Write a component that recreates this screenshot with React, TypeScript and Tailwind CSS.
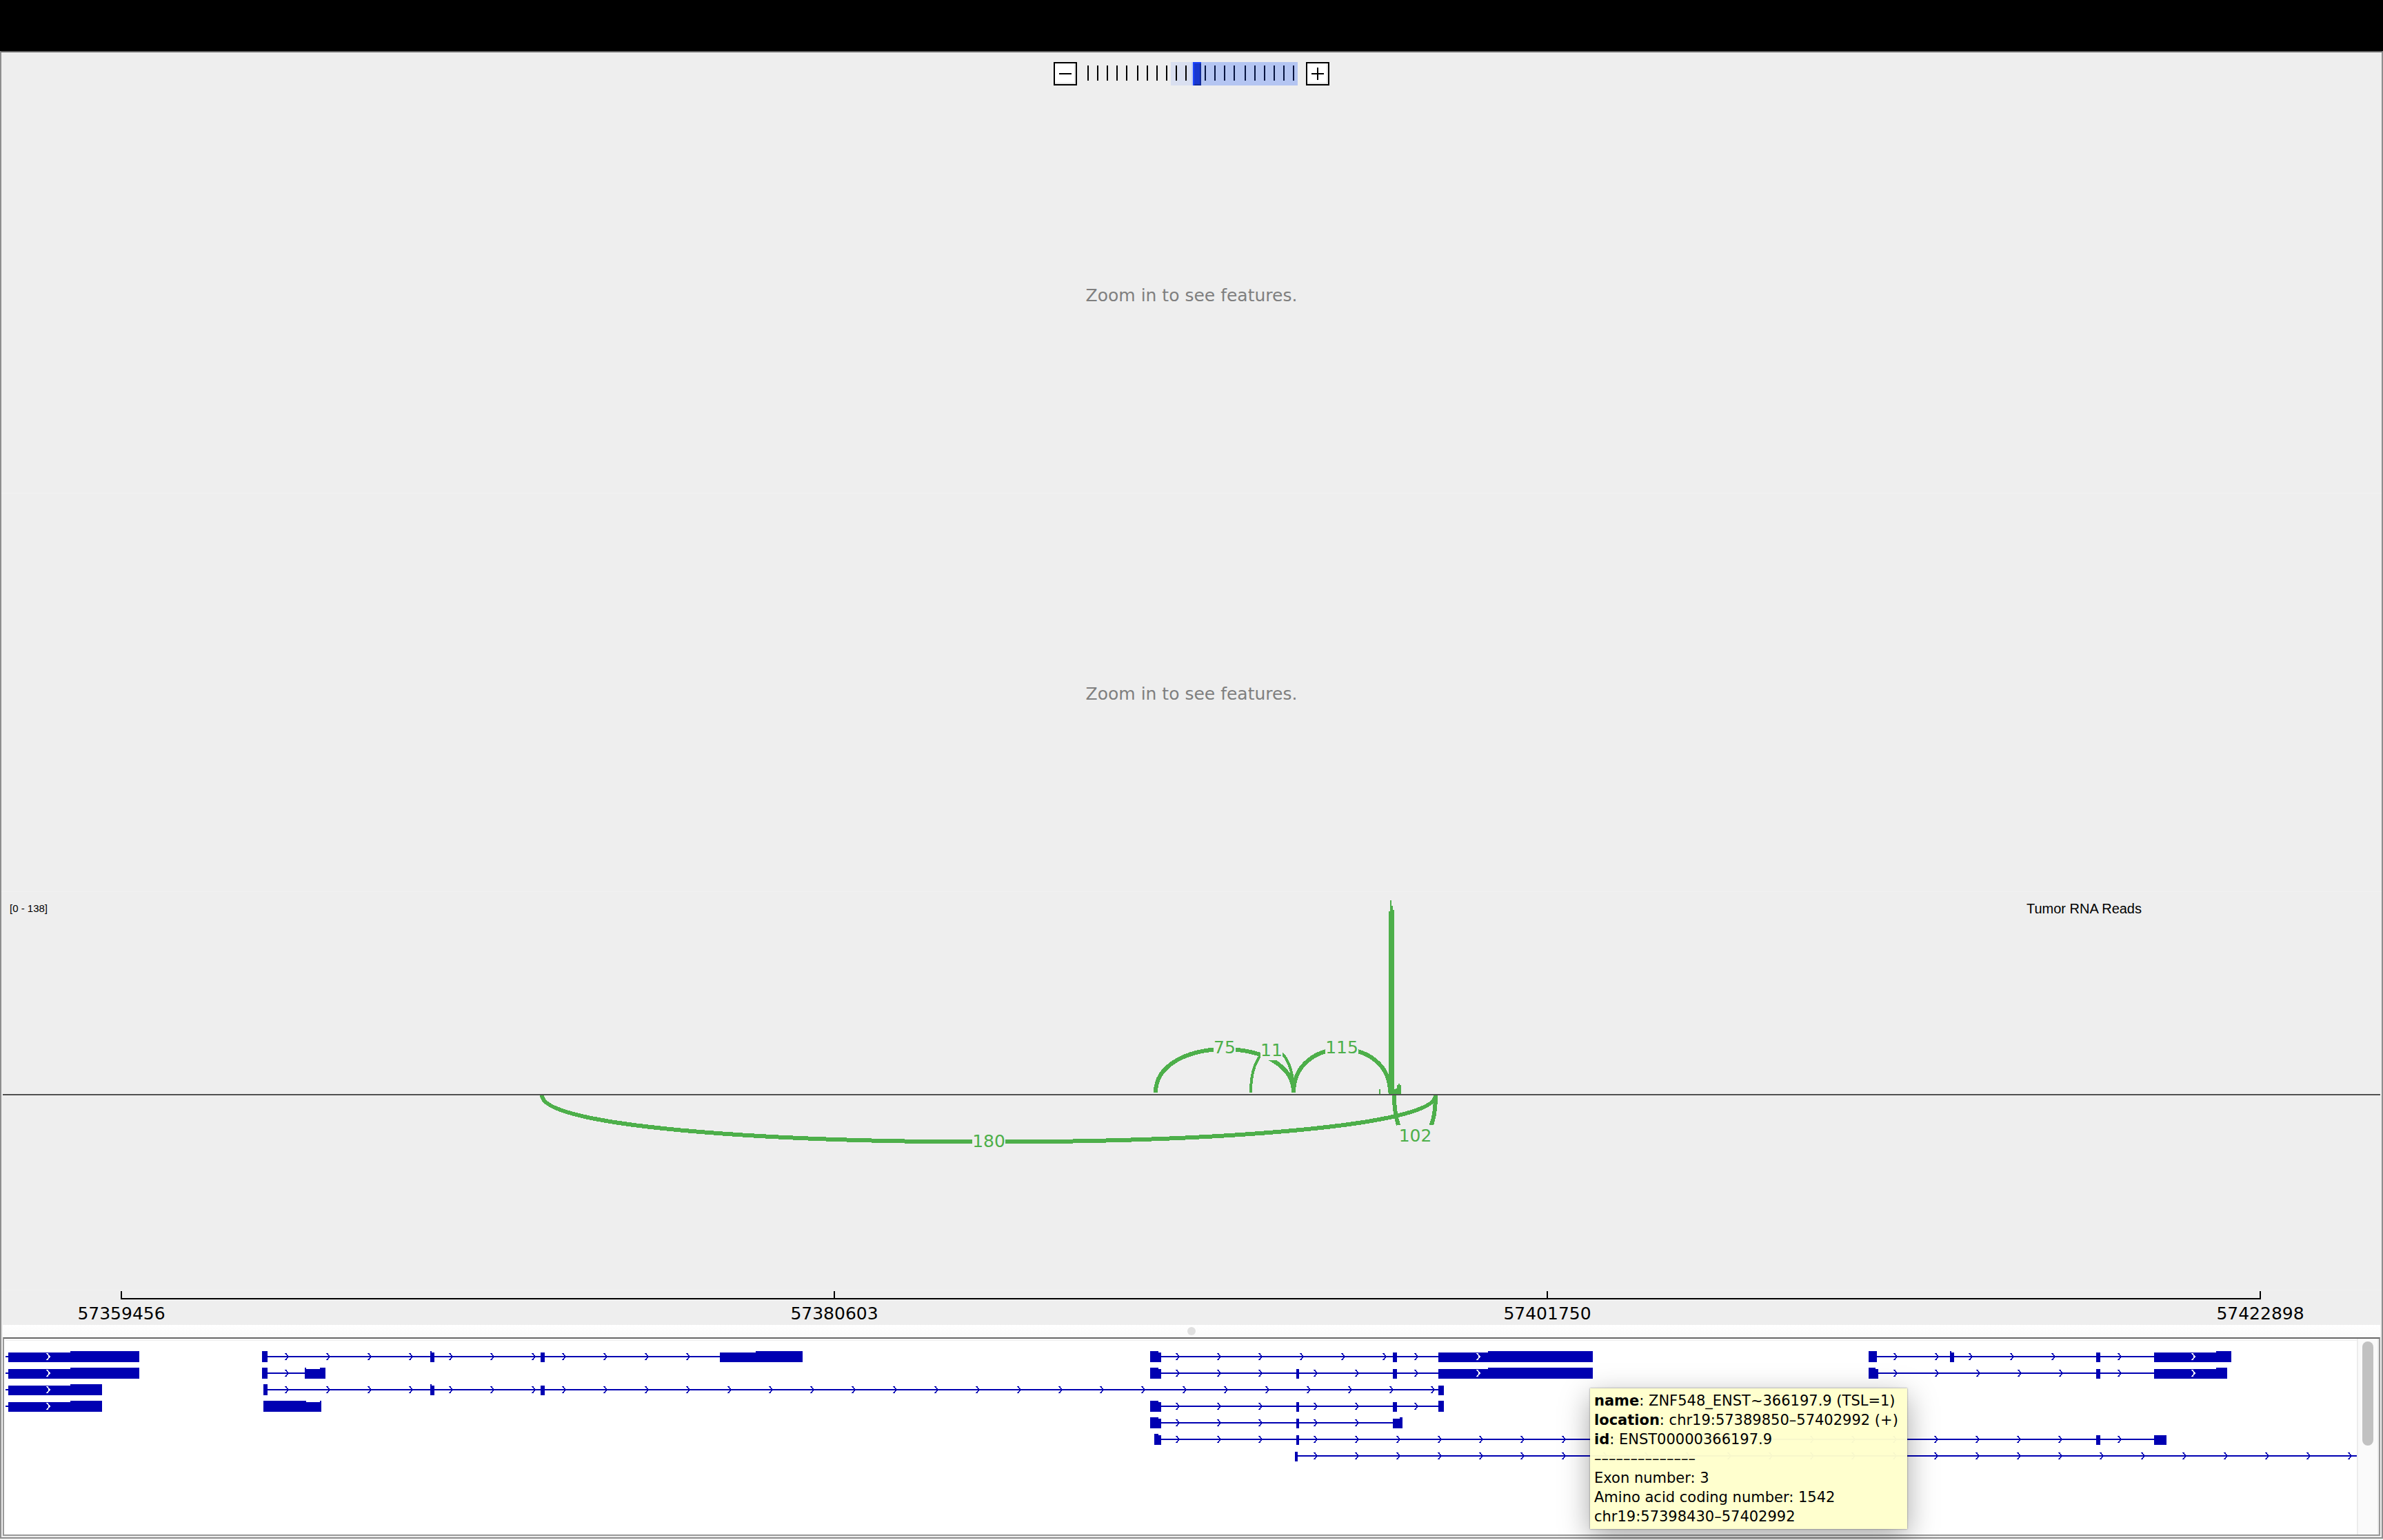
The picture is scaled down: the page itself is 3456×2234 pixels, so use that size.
import React from "react";

const GREEN = "#4daf4a";
const BLUE = "#0000b2";

const ZOOM_TICKS = [
  1577, 1591, 1605, 1619, 1633, 1649, 1663, 1677, 1691, 1705, 1719, 1747, 1761, 1775, 1789, 1805, 1819, 1833, 1847,
  1861, 1875,
];

function ZoomButton({ label, plus }: { label: string; plus?: boolean }) {
  return (
    <button
      type="button"
      aria-label={label}
      className="flex size-[34px] items-center justify-center border-2 border-black bg-white shadow-[inset_-2px_-2px_0_#e4e4e4]"
    >
      <svg viewBox="0 0 30 30" className="size-[30px]" shapeRendering="crispEdges">
        <rect x="6" y="14" width="18" height="2" />
        {plus && <rect x="14" y="6" width="2" height="18" />}
      </svg>
    </button>
  );
}

function ZoomBar() {
  return (
    <header className="flex h-[62px] shrink-0 items-start justify-center gap-3 pt-[14px]">
      <ZoomButton label="Zoom out" />
      <div className="relative h-[34px] w-[308px]">
        <svg viewBox="1574 90 308 34" className="h-full w-full" shapeRendering="crispEdges">
          <rect x="1698" y="90" width="32" height="34" fill="#d9dff0" />
          <rect x="1728" y="90" width="2" height="34" fill="#c3d0f2" />
          <rect x="1742" y="90" width="140" height="34" fill="#b4c5f2" />
          {ZOOM_TICKS.map((x) => (
            <rect key={x} x={x} y="95" width="2" height="22" fill={x > 1740 ? "#061440" : "#000"} />
          ))}
          <rect x="1730" y="90" width="12" height="34" fill="#1c45ff" />
          <rect x="1732" y="92" width="10" height="32" fill="#122c9c" />
          <rect x="1732" y="92" width="8" height="30" fill="#1838d0" />
        </svg>
        <input
          type="range"
          aria-label="Zoom level"
          min={0}
          max={21}
          defaultValue={11}
          className="absolute inset-0 h-full w-full cursor-pointer opacity-0"
        />
      </div>
      <ZoomButton label="Zoom in" plus />
    </header>
  );
}

function EmptyTrack() {
  return (
    <section className="flex min-h-0 flex-1 items-center justify-center shadow-[inset_0_-1px_0_#f1f1f1]">
      <p className="pt-1 text-[25px] leading-8 text-[#7f7f7f]">Zoom in to see features.</p>
    </section>
  );
}

type Junction = {
  from: number;
  to: number;
  base: number;
  lift: number;
  width: number;
  label: string;
  baseline: number;
  box: [number, number, number, number];
};

const JUNCTIONS: Junction[] = [
  { from: 786, to: 2082, base: 1589, lift: 90, width: 6, label: "180", baseline: 1664, box: [1410, 1640, 48, 30] },
  { from: 1676, to: 1876, base: 1585, lift: -84, width: 6, label: "75", baseline: 1528, box: [1760, 1504, 32, 30] },
  { from: 1814, to: 1876, base: 1585, lift: -84, width: 4, label: "11", baseline: 1532, box: [1828, 1508, 32, 30] },
  { from: 1876, to: 2016, base: 1585, lift: -84, width: 6, label: "115", baseline: 1528, box: [1922, 1504, 48, 30] },
  { from: 2022, to: 2082, base: 1589, lift: 90, width: 6, label: "102", baseline: 1656, box: [2026, 1632, 53, 30] },
];

function SashimiTrack() {
  return (
    <section className="relative min-h-0 flex-1 shadow-[inset_0_-1px_0_#f1f1f1] font-['Liberation_Sans',sans-serif]">
      <svg viewBox="2 1294 3452 578" className="block h-full w-full">
        <g shapeRendering="crispEdges" fill={GREEN}>
          <path d="M2014 1587V1322H2016V1306H2018V1314H2020V1320H2022V1580H2024V1579H2026V1574H2028V1572H2030V1574H2032V1587Z" />
          <rect x="2000" y="1580" width="2" height="7" />
        </g>
        {JUNCTIONS.map((j) => (
          <g key={j.label}>
            <path
              d={`M${j.from} ${j.base}C${j.from} ${j.base + j.lift} ${j.to} ${j.base + j.lift} ${j.to} ${j.base}`}
              fill="none"
              stroke={GREEN}
              strokeWidth={j.width}
              shapeRendering="crispEdges"
            />
            <rect x={j.box[0]} y={j.box[1]} width={j.box[2]} height={j.box[3]} fill="#eeeeee" />
            <text
              x={j.box[0] + j.box[2] / 2}
              y={j.baseline}
              textAnchor="middle"
              fontSize="25"
              fill={GREEN}
              className="font-['DejaVu_Sans',sans-serif]"
            >
              {j.label}
            </text>
          </g>
        ))}
        <rect x="4" y="1587" width="3448" height="2" fill="#505050" />
      </svg>
      <span className="absolute top-3 left-3 text-[15px] leading-6 text-black">[0 - 138]</span>
      <span className="absolute top-3 right-[348px] text-[20px] leading-6 text-black">Tumor RNA Reads</span>
    </section>
  );
}

const AXIS = [
  { x: 176, label: "57359456" },
  { x: 1210, label: "57380603" },
  { x: 2244, label: "57401750" },
  { x: 3278, label: "57422898" },
];

function Axis() {
  return (
    <section className="h-[50px] shrink-0">
      <svg viewBox="2 1872 3452 50" className="block h-full w-full">
        <g shapeRendering="crispEdges">
          <rect x="175" y="1883" width="3104" height="2" />
          {AXIS.map((t) => (
            <rect key={t.x} x={t.x - 1} y="1873" width="2" height="10" />
          ))}
        </g>
        {AXIS.map((t) => (
          <text
            key={t.label}
            x={t.x}
            y="1914"
            textAnchor="middle"
            fontSize="25"
            className="font-['DejaVu_Sans',sans-serif]"
          >
            {t.label}
          </text>
        ))}
      </svg>
    </section>
  );
}

type Block = { from: number; to: number; thin?: boolean };
type Transcript = { row: number; line?: [number, number]; blocks: Block[]; arrows?: number[]; white?: number[] };

const every60 = (from: number, to: number) => {
  const out: number[] = [];
  for (let x = from; x <= to; x += 60) out.push(x);
  return out;
};
const tall = (from: number, to: number): Block => ({ from, to });
const thin = (from: number, to: number): Block => ({ from, to, thin: true });

const HEAD = [tall(1668, 1680), thin(1680, 1684)];

const TRANSCRIPTS: Transcript[] = [
  { row: 0, line: [8, 12], blocks: [thin(12, 102), tall(102, 202)], white: [67] },
  { row: 1, line: [8, 12], blocks: [thin(12, 102), tall(102, 202)], white: [67] },
  { row: 2, line: [8, 12], blocks: [thin(12, 102), tall(102, 148)], white: [67] },
  { row: 3, line: [8, 12], blocks: [thin(12, 102), tall(102, 148)], white: [67] },
  {
    row: 0,
    line: [388, 1044],
    blocks: [tall(380, 388), tall(624, 626), thin(626, 630), thin(784, 790), thin(1044, 1096), tall(1096, 1164)],
    arrows: [...every60(413, 593), ...every60(651, 771), ...every60(815, 995)],
  },
  { row: 1, line: [388, 442], blocks: [tall(380, 388), tall(442, 444), thin(444, 464), tall(464, 472)], arrows: [413] },
  {
    row: 2,
    line: [388, 2086],
    blocks: [tall(382, 388), tall(624, 626), thin(626, 630), thin(784, 790), thin(2086, 2094)],
    arrows: [...every60(413, 593), ...every60(651, 771), ...every60(815, 2075)],
  },
  { row: 3, blocks: [tall(382, 444), thin(444, 464), tall(464, 466)] },
  {
    row: 0,
    line: [1684, 2086],
    blocks: [...HEAD, thin(2020, 2026), thin(2086, 2158), tall(2158, 2310)],
    arrows: [...every60(1705, 2005), 2051],
    white: [2141],
  },
  {
    row: 1,
    line: [1684, 2086],
    blocks: [...HEAD, thin(1880, 1884), thin(2020, 2026), thin(2086, 2158), tall(2158, 2310)],
    arrows: [...every60(1705, 1825), 1905, 1965, 2051],
    white: [2141],
  },
  {
    row: 3,
    line: [1684, 2086],
    blocks: [...HEAD, thin(1880, 1884), thin(2020, 2026), tall(2086, 2094)],
    arrows: [...every60(1705, 1825), 1905, 1965, 2051],
  },
  {
    row: 4,
    line: [1684, 2020],
    blocks: [...HEAD, thin(1880, 1884), thin(2020, 2030), tall(2030, 2034)],
    arrows: [...every60(1705, 1825), 1905, 1965],
  },
  {
    row: 5,
    line: [1684, 3124],
    blocks: [tall(1674, 1680), thin(1680, 1684), thin(1880, 1884), thin(3040, 3046), thin(3124, 3142)],
    arrows: [...every60(1705, 1825), ...every60(1905, 2985), 3071],
  },
  { row: 6, line: [1882, 3418], blocks: [thin(1878, 1882)], arrows: every60(1905, 3405) },
  {
    row: 0,
    line: [2722, 3124],
    blocks: [
      tall(2710, 2722),
      tall(2828, 2830),
      thin(2830, 2834),
      thin(3040, 3046),
      thin(3124, 3214),
      tall(3214, 3236),
    ],
    arrows: [2746, 2806, ...every60(2855, 2975), 3071],
    white: [3178],
  },
  {
    row: 1,
    line: [2724, 3124],
    blocks: [tall(2710, 2720), thin(2720, 2724), thin(3040, 3046), thin(3124, 3214), tall(3214, 3230)],
    arrows: [...every60(2746, 2986), 3071],
    white: [3178],
  },
];

function Arrow({ x, y, color }: { x: number; y: number; color: string }) {
  return (
    <path
      d={`M${x + 1} ${y - 5}L${x + 5} ${y}L${x + 1} ${y + 5}`}
      fill="none"
      stroke={color}
      strokeWidth="2"
      shapeRendering="crispEdges"
    />
  );
}

function GeneTrack() {
  return (
    <svg viewBox="6 1942 3412 284" className="block h-full w-full">
      <rect x="8" y="1944" width="3410" height="1" fill="#eeeeee" />
      {TRANSCRIPTS.map((t, i) => {
        const mid = 1968 + t.row * 24;
        return (
          <g key={i} shapeRendering="crispEdges">
            {t.line && <rect x={t.line[0]} y={mid - 1} width={t.line[1] - t.line[0]} height="2" fill={BLUE} />}
            {t.arrows?.map((x) => (
              <Arrow key={x} x={x} y={mid} color={BLUE} />
            ))}
            {t.blocks.map((b) => (
              <rect
                key={b.from}
                x={b.from}
                y={b.thin ? mid - 6 : mid - 8}
                width={b.to - b.from}
                height={b.thin ? 14 : 16}
                fill={BLUE}
              />
            ))}
            {t.white?.map((x) => (
              <Arrow key={x} x={x} y={mid} color="#ffffff" />
            ))}
          </g>
        );
      })}
    </svg>
  );
}

function FeatureTooltip() {
  return (
    <div
      role="tooltip"
      className="absolute top-[72px] right-[684px] w-[460px] bg-[#ffffcc]/97 px-[6px] py-1 text-[21px] leading-7 whitespace-nowrap text-black shadow-[0_0_2px_rgba(0,0,0,0.5),0_12px_40px_rgba(0,0,0,0.35)]"
    >
      <p>
        <b>name</b>: ZNF548_ENST~366197.9 (TSL=1)
      </p>
      <p>
        <b>location</b>: chr19:57389850–57402992 (+)
      </p>
      <p>
        <b>id</b>: ENST00000366197.9
      </p>
      <p>––––––––––––––</p>
      <p>Exon number: 3</p>
      <p>Amino acid coding number: 1542</p>
      <p>chr19:57398430–57402992</p>
    </div>
  );
}

export default function App() {
  return (
    <div className="flex h-screen flex-col overflow-hidden bg-[#f5f5f5] pb-[2px] font-['DejaVu_Sans',sans-serif]">
      <div className="h-[74px] shrink-0 bg-black" />
      <main className="flex min-h-0 flex-1 flex-col border-2 border-[#8e8e8e] border-t-[#666666] bg-[#eeeeee]">
        <ZoomBar />
        <EmptyTrack />
        <EmptyTrack />
        <SashimiTrack />
        <Axis />
        <div
          role="separator"
          className="mx-[2px] flex h-[18px] shrink-0 items-center justify-center bg-linear-to-b from-white to-[#fafafa]"
        >
          <span className="size-3 rounded-full bg-[#e0e0e0]" />
        </div>
        <section className="relative mx-[2px] mb-[2px] flex h-[288px] shrink-0 border-2 border-[#999999] border-t-[#666666] bg-white">
          <div className="min-w-0 flex-1">
            <GeneTrack />
          </div>
          <div className="flex w-8 shrink-0 justify-center border-x-2 border-[#ececec] bg-[#fafafa] pt-1">
            <div className="h-[151px] w-4 rounded-full bg-[#c1c1c1]" />
          </div>
          <FeatureTooltip />
        </section>
      </main>
    </div>
  );
}
